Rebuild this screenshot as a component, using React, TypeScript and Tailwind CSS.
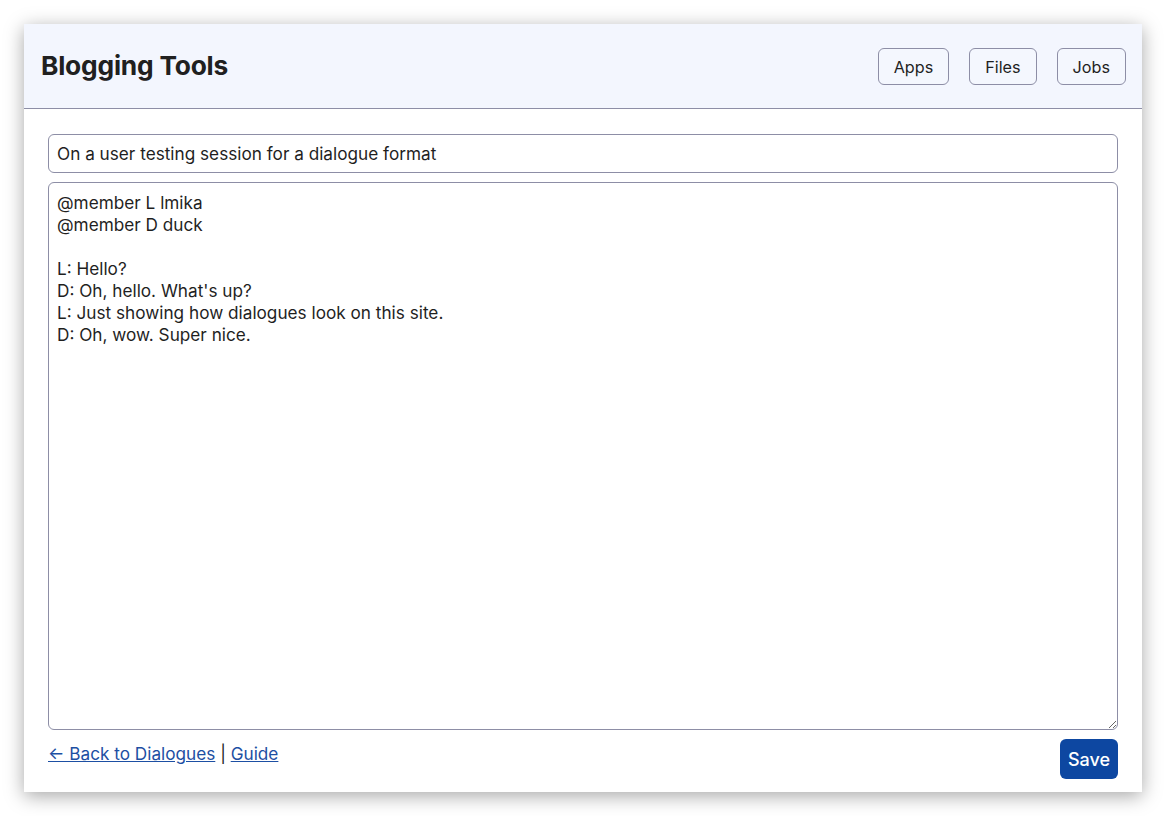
import React from 'react';

const dialogueText = `@member L lmika
@member D duck

L: Hello?
D: Oh, hello. What's up?
L: Just showing how dialogues look on this site.
D: Oh, wow. Super nice.`;

const NavButton: React.FC<{ children: React.ReactNode }> = ({ children }) => (
  <button className="h-[37px] px-[15px] rounded-md border border-[#8d8ea6] bg-[#f4f7fe] text-[16.2px] text-[#1f1f1f] leading-none pt-[2px]">
    {children}
  </button>
);

export default function App() {
  return (
    <div className="min-h-screen bg-white p-6 font-['Inter','Liberation_Sans',sans-serif]">
      <div className="h-[768px] flex flex-col bg-white shadow-[0_4px_18px_rgba(0,0,0,0.35)]">
        <header className="h-[85px] flex items-center justify-between pl-[17px] pr-4 bg-[#f3f6fe] border-b border-[#8d8ea6]">
          <h1 className="text-[26.3px] font-bold text-[#202020] tracking-[-0.2px]">Blogging Tools</h1>
          <nav className="flex gap-5">
            <NavButton>Apps</NavButton>
            <NavButton>Files</NavButton>
            <NavButton>Jobs</NavButton>
          </nav>
        </header>
        <main className="flex-1 flex flex-col px-6 pt-[25px] pb-[13px] gap-[9px]">
          <input
            className="h-[39px] w-full rounded-md border border-[#8d8ea6] px-2 text-[17.2px] text-[#1f1f1f] outline-none"
            defaultValue="On a user testing session for a dialogue format"
          />
          <textarea
            className="flex-1 w-full rounded-md border border-[#8d8ea6] px-2 py-[9px] text-[17.2px] leading-[22px] text-[#1f1f1f] outline-none resize-y"
            defaultValue={dialogueText}
            spellCheck={false}
          />
          <div className="flex items-start justify-between">
            <p className="text-[17.2px] text-[#222] pt-[2px]">
              <a href="#" className="text-[#1d4fa3] underline">← Back to Dialogues</a>
              {' | '}
              <a href="#" className="text-[#1d4fa3] underline">Guide</a>
            </p>
            <button className="h-10 w-[58px] rounded-md bg-[#0d47a1] text-white text-[18px] font-medium">Save</button>
          </div>
        </main>
      </div>
    </div>
  );
}
